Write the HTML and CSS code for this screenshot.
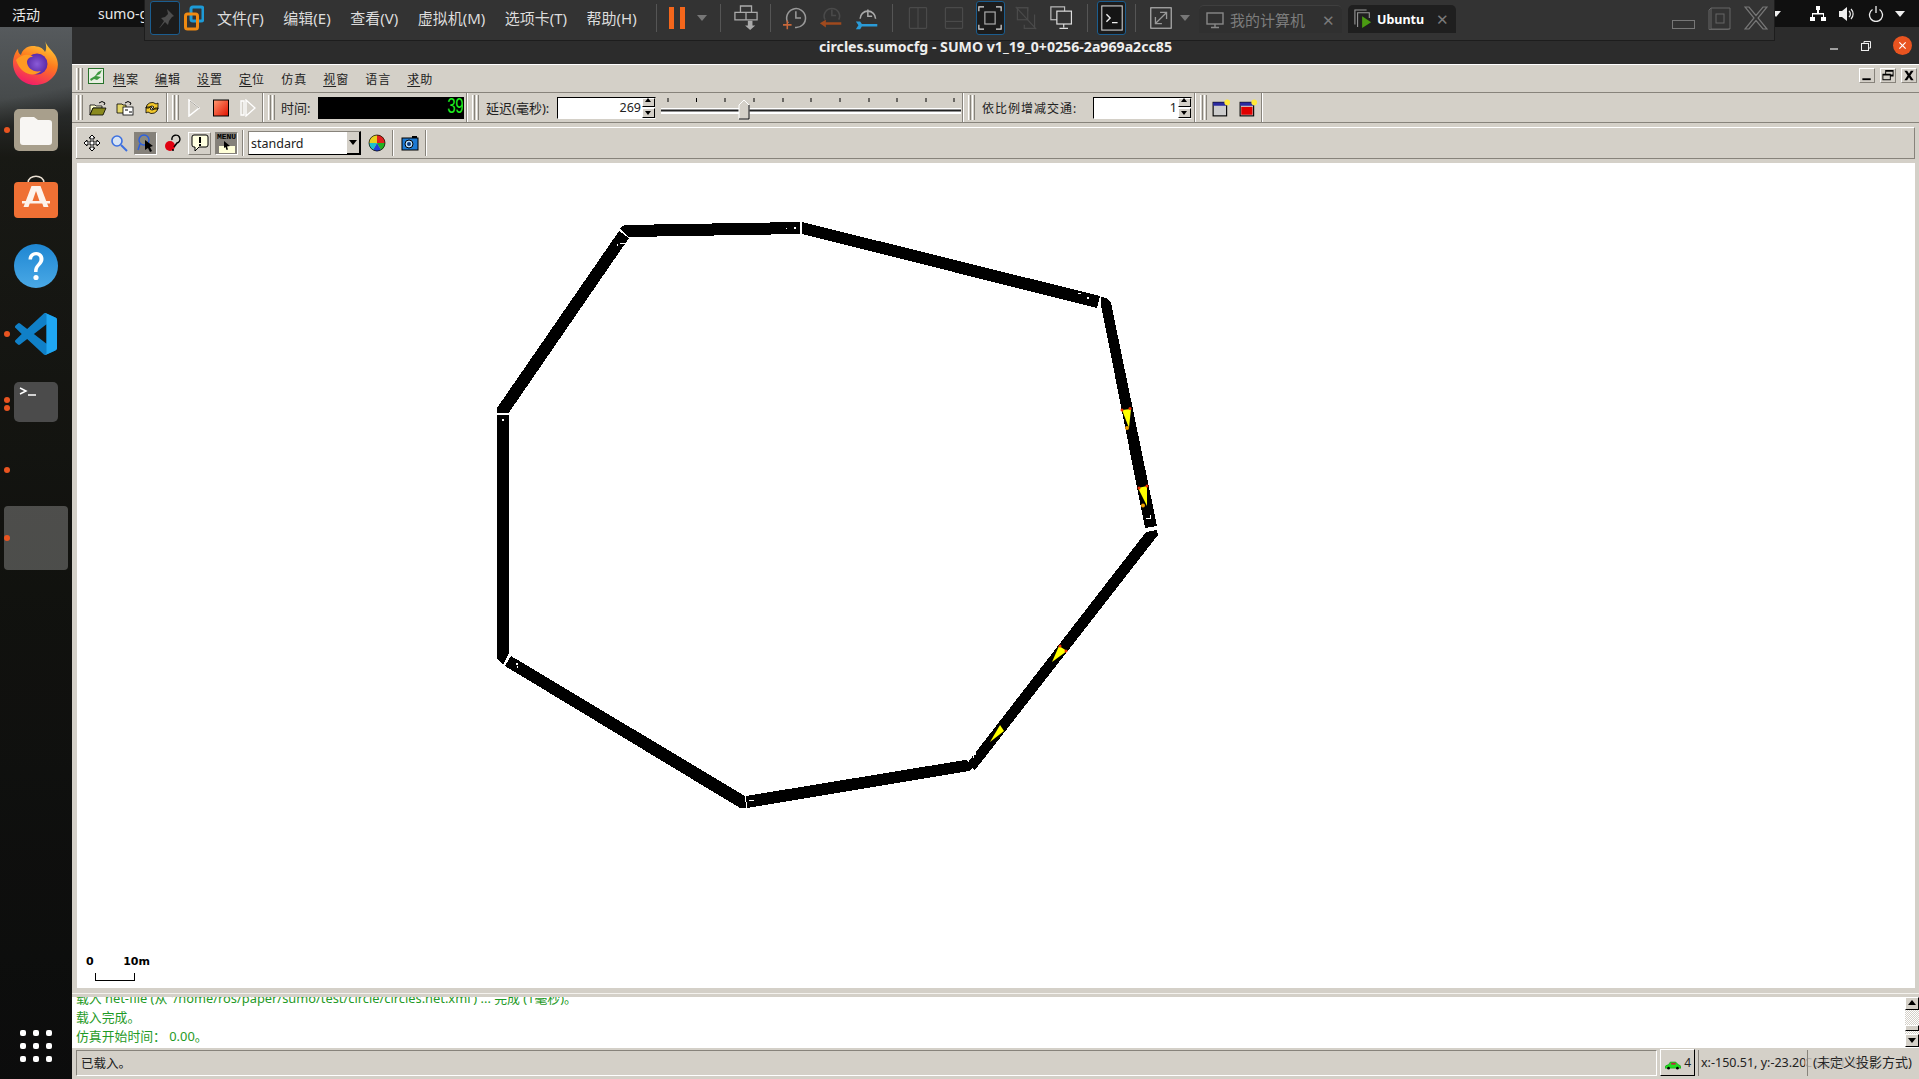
FILE: index.html
```html
<!DOCTYPE html>
<html lang="zh">
<head>
<meta charset="utf-8">
<title>circles.sumocfg - SUMO</title>
<link rel="stylesheet" href="styles.css">
</head>
<body>
<header class="gnome-bar">
  <span class="activities">活动</span>
  <span class="app-name">sumo-gui</span>
  <div class="tray">
    <span class="tray-caret tray-caret-left"></span>
    <svg class="tray-icon" viewBox="0 0 16 16"><path d="M6 0h4v4H9v3h5v4h2v4h-5v-4h2V8.500H3V11h2v4H0v-4h2V7h5V4H6z" fill="#fff"/></svg>
    <svg class="tray-icon" viewBox="0 0 16 16"><path d="M0 5h3l5-4v14l-5-4H0z" fill="#eee"/><path d="M10 5a4 4 0 0 1 0 6M12 3a7 7 0 0 1 0 10" stroke="#eee" stroke-width="1.200" fill="none"/></svg>
    <svg class="tray-icon tray-power" viewBox="0 0 16 16"><path d="M4.500 3.500a6.500 6.500 0 1 0 7 0M8 0v7" stroke="#eee" stroke-width="1.300" fill="none"/></svg>
    <span class="tray-caret"></span>
  </div>
</header>

<div class="vm-toolbar">
  <button class="vt-pin"><svg viewBox="0 0 20 20" class="vt-svg16"><path d="M12 1l7 7-2 1-3 4-1 4-3-3-7 8 6-9-3-3 4-1 3-3z" fill="#4d4d4d"/></svg></button>
  <svg class="vt-logo" viewBox="0 0 20 26"><rect x="7" y="2" width="12" height="14" rx="2" fill="none" stroke="#1d9ad6" stroke-width="3"/><rect x="1.500" y="9" width="12" height="15" rx="2" fill="none" stroke="#f08a12" stroke-width="3"/></svg>
  <nav class="vt-menu">
    <span>文件(F)</span><span>编辑(E)</span><span>查看(V)</span><span>虚拟机(M)</span><span>选项卡(T)</span><span>帮助(H)</span>
  </nav>
  <i class="vt-sep"></i>
  <svg class="vt-pause" viewBox="0 0 16 22"><rect x="0" width="5" height="22" fill="#f4661b"/><rect x="11" width="5" height="22" fill="#f4661b"/></svg>
  <i class="vt-caret vt-caret-a"></i>
  <i class="vt-sep vt-sep-a"></i>
  <span class="vt-btn vt-btn-first"><svg viewBox="0 0 26 28" class="vt-svg"><path d="M7 1h12v7H7zM1 8h12v8H1zM13 8h12v8H13z" fill="none" stroke="#aaa" stroke-width="1.400"/><path d="M15 17h5v5h3l-5.500 5-5.500-5h3z" fill="#aaa"/></svg></span>
  <i class="vt-sep vt-sep-b"></i>
  <span class="vt-btn vt-btn-b"><svg viewBox="0 0 28 28" class="vt-svg"><path d="M6 20A11 11 0 1 1 14 25" fill="none" stroke="#999" stroke-width="1.800"/><path d="M15 6v8h6" fill="none" stroke="#999" stroke-width="1.800"/><path d="M5 17v10M0 22h10" stroke="#c8673a" stroke-width="1.800"/></svg></span>
  <span class="vt-btn"><svg viewBox="0 0 28 28" class="vt-svg"><path d="M7 16A9 9 0 1 1 23 16" fill="none" stroke="#4a4a4a" stroke-width="1.800"/><path d="M15 4v7h5" fill="none" stroke="#4a4a4a" stroke-width="1.800"/><path d="M1 20l7-4v3h18v3H8v3z" fill="#a04a1e"/></svg></span>
  <span class="vt-btn"><svg viewBox="0 0 28 28" class="vt-svg"><path d="M6 15A9 9 0 1 1 24 15" fill="none" stroke="#aaa" stroke-width="1.800"/><path d="M15 4v8h5" fill="none" stroke="#aaa" stroke-width="1.800"/><path d="M1 18h5l2 3h18v3H8l-2 3H1l3-4.500z" fill="#2a9bd8"/></svg></span>
  <i class="vt-sep vt-sep-c"></i>
  <span class="vt-btn vt-btn-c"><svg viewBox="0 0 28 28" class="vt-svg"><rect x="4" y="2" width="20" height="24" rx="1" fill="none" stroke="#4a4a4a" stroke-width="1.400"/><path d="M14 2v24" stroke="#4a4a4a" stroke-width="1.400"/></svg></span>
  <span class="vt-btn"><svg viewBox="0 0 28 28" class="vt-svg"><rect x="4" y="2" width="20" height="24" rx="1" fill="none" stroke="#4a4a4a" stroke-width="1.400"/><path d="M4 18h20" stroke="#4a4a4a" stroke-width="1.400"/></svg></span>
  <span class="vt-btn vt-active"><svg viewBox="0 0 28 28" class="vt-svg"><path d="M1 6V1h6M21 1h6v5M27 22v5h-6M7 27H1v-5" fill="none" stroke="#ddd" stroke-width="1.400"/><rect x="8" y="7" width="12" height="14" fill="none" stroke="#aaa" stroke-width="1.400"/></svg></span>
  <span class="vt-btn"><svg viewBox="0 0 28 28" class="vt-svg"><path d="M4 2h12v4M24 10v16H12v-4M2 1l24 26" fill="none" stroke="#4a4a4a" stroke-width="1.400"/><rect x="4" y="2" width="12" height="14" fill="none" stroke="#4a4a4a" stroke-width="1.400"/></svg></span>
  <span class="vt-btn"><svg viewBox="0 0 28 28" class="vt-svg"><rect x="1" y="1" width="16" height="15" fill="#333" stroke="#bbb" stroke-width="1.400"/><rect x="8" y="6" width="17" height="15" fill="#333" stroke="#ddd" stroke-width="1.400"/><path d="M16 21v4M11 26h10" stroke="#ddd" stroke-width="1.400"/></svg></span>
  <i class="vt-sep vt-sep-d"></i>
  <span class="vt-term"><svg viewBox="0 0 24 28" class="vt-svg"><rect x="1" y="1" width="22" height="26" fill="#151515" stroke="#ccc" stroke-width="1.200"/><path d="M6 10l4 4-4 4M12 19h6" fill="none" stroke="#eee" stroke-width="1.500"/></svg></span>
  <i class="vt-sep vt-sep-e"></i>
  <span class="vt-btn vt-btn-e"><svg viewBox="0 0 24 28" class="vt-svg"><rect x="1" y="3" width="22" height="22" fill="none" stroke="#bbb" stroke-width="1.200"/><path d="M6 20L18 8M11 8h7v7M6 13v7h7" fill="none" stroke="#999" stroke-width="1.400"/></svg></span>
  <i class="vt-caret vt-caret-b"></i>
  <div class="vt-tab vt-tab-a"><svg viewBox="0 0 18 18" class="vt-tab-icon"><rect x="1" y="2" width="16" height="11" fill="none" stroke="#888" stroke-width="1.400"/><path d="M9 13v3M5 16.500h8" stroke="#888" stroke-width="1.400"/></svg><span>我的计算机</span><b class="vt-x">✕</b></div>
  <div class="vt-tab vt-tab-b"><svg viewBox="0 0 20 22" class="vt-tab-icon"><path d="M1 17V1h13M4 20V4h13v6" fill="none" stroke="#999" stroke-width="1.200"/><path d="M9 8l10 6.500L9 21z" fill="#4b9b12"/></svg><span>Ubuntu</span><b class="vt-x">✕</b></div>
  <div class="vt-win">
    <svg viewBox="0 0 23 10" class="vt-win-min"><rect x=".5" y=".5" width="22" height="8" fill="none" stroke="#777"/></svg>
    <svg viewBox="0 0 23 24" class="vt-win-max"><path d="M3 2h19v21H3zM3 2L1 4v19.500h19l2-1" fill="none" stroke="#666"/><rect x="8" y="8" width="8" height="9" fill="none" stroke="#666"/></svg>
    <svg viewBox="0 0 24 24" class="vt-win-close"><path d="M1 1h4l7 8.500L19 1h4l-9 11 9 11h-4l-7-8.500L5 23H1l9-11z" fill="none" stroke="#777" stroke-width="1.200"/></svg>
  </div>
</div>

<div class="desk">
  <aside class="dock">
    <div class="dock-item">
      <svg class="dock-icon" viewBox="0 0 46 46">
        <defs>
          <linearGradient id="ff1" x1=".7" y1="0" x2=".3" y2="1"><stop offset="0" stop-color="#ffd43a"/><stop offset=".45" stop-color="#ff7a1e"/><stop offset="1" stop-color="#f2186c"/></linearGradient>
          <radialGradient id="ff2"><stop offset="0" stop-color="#8a5bd8"/><stop offset="1" stop-color="#5b2aa8"/></radialGradient>
        </defs>
        <path d="M32 1c1 6 6 9 10 15 5 8 3 17-2 22-5 6-12 8-18 8C10 46 0 36 0 24c0-5 2-11 5-14 0 3 1 5 3 6 1-5 6-9 11-9 7 0 11 2 13 6 2-3 1-8 0-12z" fill="url(#ff1)"/>
        <circle cx="24" cy="25" r="10.500" fill="url(#ff2)"/>
        <path d="M3 21c4-5 13-7 17-3-4 0-6 2-6 5 0 6 7 11 14 9-6 6-20 5-25-11z" fill="#ff9a22"/>
      </svg>
    </div>
    <div class="dock-item"><i class="dot dot-mid"></i>
      <svg class="dock-icon" viewBox="0 0 46 46"><rect x="1" y="2" width="44" height="42" rx="5" fill="#a89f8c"/><path d="M7 13q0-3 3-3h11l4 3h11q3 0 3 3v19q0 3-3 3H10q-3 0-3-3z" fill="#f8f6f3"/></svg>
    </div>
    <div class="dock-item">
      <svg class="dock-icon" viewBox="0 0 46 46"><path d="M15 8c0-9 16-9 16 0" fill="none" stroke="#e9dfd2" stroke-width="1.500"/><rect x="1" y="7" width="44" height="36" rx="4" fill="#ef7034"/><path d="M18.500 11h9l8 21h-5l-2-6H17.500l-2 6h-5zM23 16l-3.500 10h7z" fill="#fdf3ec"/><rect x="9" y="26" width="28" height="2.500" fill="#fdf3ec"/></svg>
    </div>
    <div class="dock-item">
      <svg class="dock-icon" viewBox="0 0 46 46"><defs><linearGradient id="hp" x1="0" y1="0" x2="0" y2="1"><stop offset="0" stop-color="#1e86d2"/><stop offset="1" stop-color="#4aa9e6"/></linearGradient></defs><circle cx="23" cy="23" r="22" fill="url(#hp)"/><path d="M15.500 16.500c0-10 15-10 15-.5 0 6-6 6-6 13h-3.500c0-8 5.500-8 5.500-13 0-5-7-5-7.500.5z" fill="#fff"/><circle cx="23" cy="34.500" r="2.600" fill="#fff"/></svg>
    </div>
    <div class="dock-item"><i class="dot dot-mid"></i>
      <svg class="dock-icon dock-icon-code" viewBox="0 0 100 100"><path d="M96 11L75 1a6 6 0 0 0-7 1L29 38 12 25a4 4 0 0 0-5 0l-5.500 5a4 4 0 0 0 0 6L16 50 1.500 64a4 4 0 0 0 0 6L7 75a4 4 0 0 0 5 0l17-13 39 36a6 6 0 0 0 7 1l21-10a6 6 0 0 0 4-6V17a6 6 0 0 0-4-6zM75 73L45 50l30-23z" fill="#1080c8"/><path d="M68 98a6 6 0 0 0 7 1l21-10a6 6 0 0 0 4-6V17a6 6 0 0 0-4-6L75 1a6 6 0 0 0-7 1 4 4 0 0 1 7 3v90a4 4 0 0 1-7 3z" fill="#1fa6f2"/></svg>
    </div>
    <div class="dock-item"><i class="dot dot-up"></i><i class="dot dot-down"></i>
      <svg class="dock-icon" viewBox="0 0 46 46"><rect x="1" y="3" width="44" height="40" rx="5" fill="#4b4b4b"/><path d="M7 9l6 3-6 3" fill="none" stroke="#fff" stroke-width="1.500"/><path d="M15 16h8" stroke="#fff" stroke-width="1.500"/></svg>
    </div>
    <div class="dock-item"><i class="dot dot-mid"></i></div>
    <div class="dock-item"><i class="dot dot-mid"></i><div class="dock-active"></div></div>
    <div class="app-grid"><i></i><i></i><i></i><i></i><i></i><i></i><i></i><i></i><i></i></div>
  </aside>

  <div class="win">
    <div class="title-bar">
      <span class="title-text">circles.sumocfg - SUMO v1_19_0+0256-2a969a2cc85</span>
      <div class="title-btns">
        <svg viewBox="0 0 10 10" class="tb-min"><path d="M1 8h8" stroke="#eee" stroke-width="1.200"/></svg>
        <svg viewBox="0 0 10 10" class="tb-max"><path d="M3 2.500V.5h6.500V7H7.500" fill="none" stroke="#eee"/><rect x=".5" y="2.500" width="7" height="7" fill="none" stroke="#eee"/></svg>
        <span class="tb-close"><svg viewBox="0 0 10 10"><path d="M1.500 1.500l7 7M8.500 1.500l-7 7" stroke="#fff" stroke-width="1.300"/></svg></span>
      </div>
    </div>

    <main class="sumo">
      <div class="menu-row">
        <i class="grip"></i>
        <svg class="net-logo" viewBox="0 0 16 16"><rect x=".5" y=".5" width="15" height="15" fill="#e8efe2" stroke="#27722b"/><path d="M2 11l5-3 3-4 4-2-2 4-4 2 5 1-4 3-3-1-3 2z" fill="#3d9a3f"/></svg>
        <nav class="menu-items">
          <span><u>档</u>案</span><span><u>编</u>辑</span><span><u>设</u>置</span><span><u>定</u>位</span><span>仿真</span><span><u>视</u>窗</span><span>语言</span><span><u>求</u>助</span>
        </nav>
        <div class="mdi-btns">
          <span class="mdi"><svg viewBox="0 0 14 14"><rect x="2" y="10" width="9" height="2"/></svg></span>
          <span class="mdi"><svg viewBox="0 0 14 14"><path d="M4 1h9v7h-3v4H1V5h3zM5 3v2h5v1h2V3zM2 7v4h7V7z" fill-rule="evenodd"/></svg></span>
          <span class="mdi"><svg viewBox="0 0 14 14"><path d="M2 2h3l2 3 2-3h3L8.500 7 12 12H9L7 9l-2 3H2l3.500-5z"/></svg></span>
        </div>
      </div>

      <div class="tool-row">
        <section class="tb-sec sec-a">
          <i class="grip"></i>
          <span class="ico"><svg viewBox="0 0 18 16"><path d="M1 5h5l1 1h6v2H4L1 15z" fill="#ffffd0" stroke="#000" stroke-width=".8"/><path d="M1 15l3-7h13l-3 7z" fill="#8a8a1e" stroke="#000" stroke-width=".8"/><path d="M10 3q3-3 6 0l-1 2" fill="none" stroke="#000"/></svg></span>
          <span class="ico"><svg viewBox="0 0 18 16"><path d="M1 4h5l1 1h3v8H1z" fill="#e4d76a" stroke="#000" stroke-width=".8"/><rect x="7" y="7" width="10" height="8" fill="#fff" stroke="#000" stroke-width=".8"/><path d="M9 10h3M13 12h3" stroke="#000"/><path d="M9 3q3-3 6 0l-1 2" fill="none" stroke="#000"/></svg></span>
          <span class="ico"><svg viewBox="0 0 18 18"><path d="M3 9a6 6 0 0 1 10-4l2-1v6h-6l2-2a3 3 0 0 0-5 1zM15 9a6 6 0 0 1-10 4l-2 1V8h6l-2 2a3 3 0 0 0 5-1z" fill="#f1c72c" stroke="#000" stroke-width=".8"/></svg></span>
        </section>
        <section class="tb-sec sec-b">
          <i class="grip"></i>
          <span class="ico"><svg viewBox="0 0 14 18"><path d="M2 1l10 8-10 8z" fill="none" stroke="#fff" stroke-width="1.500"/><path d="M3 2l9 7" stroke="#a8a49c"/></svg></span>
          <span class="ico"><svg viewBox="0 0 16 18"><defs><linearGradient id="st" x1="0" y1="0" x2="1" y2="1"><stop offset="0" stop-color="#ff9a70"/><stop offset="1" stop-color="#e01000"/></linearGradient></defs><rect x=".5" y="1" width="15" height="16" fill="url(#st)" stroke="#000"/></svg></span>
          <span class="ico"><svg viewBox="0 0 16 18"><path d="M1 2h3v14H1z" fill="none" stroke="#fff" stroke-width="1.300"/><path d="M6 1l9 8-9 8z" fill="none" stroke="#fff" stroke-width="1.300"/></svg></span>
        </section>
        <section class="tb-sec sec-c">
          <i class="grip"></i>
          <span class="lbl lbl-time">时间:</span>
          <div class="lcd"><span>39</span></div>
        </section>
        <section class="tb-sec sec-d">
          <i class="grip"></i>
          <span class="lbl lbl-delay">延迟(毫秒):</span>
          <div class="spin spin-delay"><span class="spin-val">269</span><div class="spin-arrows"><i class="up"></i><i class="down"></i></div></div>
          <svg class="slider" viewBox="0 0 300 26">
            <path d="M7 3v4M35.500 3v4M64 3v4M93 3v4M122 3v4M150 3v4M179 3v4M208 3v4M236 3v4M265 3v4M293 3v4" stroke="#000"/>
            <rect x="0" y="13" width="300" height="6" fill="#fff"/><rect x="0" y="14.500" width="300" height="2" fill="#222"/>
            <path d="M78 10l5-5 5 5v14H78z" fill="#d4d0c8" stroke="#fff"/><path d="M88 10v14H78" fill="none" stroke="#000"/>
          </svg>
        </section>
        <section class="tb-sec sec-e">
          <i class="grip"></i>
          <span class="lbl lbl-scale">依比例增减交通:</span>
          <div class="spin spin-scale"><span class="spin-val">1</span><div class="spin-arrows"><i class="up"></i><i class="down"></i></div></div>
        </section>
        <section class="tb-sec sec-f">
          <i class="grip"></i>
          <span class="ico ico-win"><svg viewBox="0 0 16 16"><rect x="1" y="3" width="12" height="12" fill="#ccc" stroke="#000"/><rect x="1" y="3" width="12" height="3" fill="#2a2aa0"/><circle cx="13.500" cy="3" r="2.500" fill="#ffe83a"/></svg></span>
          <span class="ico ico-win"><svg viewBox="0 0 16 16"><rect x="1" y="3" width="12" height="12" fill="#ccc" stroke="#000"/><rect x="1" y="3" width="12" height="3" fill="#2a2aa0"/><rect x="2" y="7" width="10" height="7" fill="#e00000"/><circle cx="13.500" cy="3" r="2.500" fill="#ffe83a"/></svg></span>
        </section>
      </div>

      <div class="view-row">
        <span class="vb"><svg viewBox="0 0 18 18"><path d="M9 1l3 3h-2v4h4V6l3 3-3 3v-2h-4v4h2l-3 3-3-3h2v-4H4v2L1 9l3-3v2h4V4H6z" fill="#fff" stroke="#000" stroke-width="1"/></svg></span>
        <span class="vb"><svg viewBox="0 0 18 18"><circle cx="7" cy="7" r="5" fill="#d8e4f4" stroke="#3c70e0" stroke-width="1.600"/><path d="M11 11l6 6" stroke="#3c70e0" stroke-width="2"/></svg></span>
        <span class="vb vb-on"><svg viewBox="0 0 18 18"><circle cx="7" cy="6" r="5" fill="#8a8a80" stroke="#2c60e0" stroke-width="1.400"/><path d="M3 10l-2 6" stroke="#2c60e0" stroke-width="1.500"/><path d="M8 6l8 6-3 1 2 4-2 1-2-4-3 2z" fill="#000"/></svg></span>
        <span class="vb"><svg viewBox="0 0 18 18"><circle cx="6" cy="12" r="5" fill="#e00010"/><path d="M8 6a4 4 0 1 1 5 3l-3 4M9 15v2" fill="none" stroke="#000" stroke-width="1.500"/></svg></span>
        <span class="vb vb-raised"><svg viewBox="0 0 18 18"><path d="M3 1h12q2 0 2 2v8q0 2-2 2H8l-4 4v-4H3q-2 0-2-2V3q0-2 2-2z" fill="#ffffe0" stroke="#000"/><path d="M9 3v6M9 10v2" stroke="#000" stroke-width="2"/></svg></span>
        <span class="vb vb-on vb-menu"><b>MENU</b><svg viewBox="0 0 18 12"><rect x="1" y="5" width="16" height="7" fill="#ffffd8"/><path d="M6 0l6 5-3 .5 1 3-1.500.5-1-3L6 7z" fill="#000"/></svg></span>
        <i class="vsep"></i>
        <div class="combo"><span>standard</span><i class="combo-btn"></i></div>
        <span class="vb vb-color"><svg viewBox="0 0 18 18"><circle cx="9" cy="9" r="8" fill="#e8d020"/><path d="M9 9L9 1a8 8 0 0 1 8 8z" fill="#e02020"/><path d="M9 9h8a8 8 0 0 1-4 7z" fill="#20b020"/><path d="M9 9l4 7a8 8 0 0 1-8 0z" fill="#2040e0"/><path d="M9 9l-4 7a8 8 0 0 1-4-7z" fill="#20c0d0"/><circle cx="9" cy="9" r="8" fill="none" stroke="#000" stroke-width=".7"/></svg></span>
        <i class="vsep"></i>
        <span class="vb vb-cam"><svg viewBox="0 0 18 16"><rect x="1" y="3" width="16" height="12" fill="#1c7ad4" stroke="#000"/><rect x="11" y="1" width="5" height="2" fill="#000"/><circle cx="8" cy="9" r="4" fill="#bfe4ff" stroke="#000"/><circle cx="8" cy="9" r="2" fill="#0a3a80"/></svg></span>
        <i class="vsep"></i>
      </div>

      <div class="canvas">
        <svg class="net" viewBox="77 163 1838 825" preserveAspectRatio="none" shape-rendering="crispEdges">
          <g fill="#000">
            <polygon points="497,408 497,412.500 509,412.500 629,238 619,231"/>
            <polygon points="620,228 625,225 800,222 800,234 628,237"/>
            <polygon points="802,222 1100,296 1097,308 802,234"/>
            <polygon points="1101,297 1107,298 1111,303 1157,526 1145,528 1101,305"/>
            <polygon points="1146,532 1157,530 1158,535 975,770 967,763.500"/>
            <polygon points="965,760 968,761 972,768 969,771 747,808 746,796"/>
            <polygon points="511,656 745,796 746,808 740,808 505,666"/>
            <polygon points="497,415 509,415 509,653 503,665 497,658"/>
          </g>
          <g fill="#fff">
            <rect x="502" y="419" width="2" height="2"/>
            <rect x="794" y="227" width="2" height="2"/><rect x="786" y="228" width="1" height="1"/>
            <rect x="620" y="243" width="5" height="1"/><rect x="617" y="244" width="1" height="2"/>
            <rect x="1087" y="297" width="2" height="2"/><rect x="1078" y="293" width="3" height="1"/>
            <rect x="1146" y="518" width="4" height="1"/><rect x="1150" y="515" width="1" height="4"/>
            <rect x="973" y="755" width="1" height="3"/><rect x="974" y="753" width="2" height="2"/>
            <rect x="516" y="663" width="2" height="2"/><rect x="517" y="666" width="1" height="2"/>
            <rect x="749" y="800" width="5" height="1"/>
          </g>
          <g fill="#ffff00" shape-rendering="auto">
            <polygon points="1122,410 1131,409 1129,428"/>
            <polygon points="1138,488 1147,486 1147,506"/>
            <polygon points="1059,646 1067,651 1052,662"/>
            <polygon points="1000,725 1004,731 990,742"/>
          </g>
          <g fill="#f03000" shape-rendering="auto">
            <circle cx="1122" cy="410" r="1.500"/><circle cx="1130" cy="408.500" r="1.500"/>
            <circle cx="1139" cy="488" r="1.500"/><circle cx="1147" cy="486" r="1.500"/>
            <circle cx="1060" cy="646" r="1.500"/><circle cx="1066" cy="651" r="1.500"/>
          </g>
          <g fill="#f0a000" shape-rendering="auto">
            <circle cx="1127" cy="428" r="2"/><circle cx="1143" cy="505.500" r="2"/>
          </g>
        </svg>
        <div class="scale-bar">
          <div class="scale-labels"><b>0</b><b>10m</b></div>
          <div class="scale-rule"></div>
        </div>
      </div>
      <div class="sash"></div>

      <div class="messages">
        <div class="msg-text">
          <p>载入 net-file (从 '/home/ros/paper/sumo/test/circle/circles.net.xml') ... 完成 (1毫秒)。</p>
          <p>载入完成。</p>
          <p>仿真开始时间： 0.00。</p>
        </div>
        <div class="msg-scroll"><i class="sb-btn up"></i><i class="sb-track"></i><i class="sb-thumb"></i><i class="sb-track sb-short"></i><i class="sb-btn down"></i></div>
      </div>

      <footer class="status">
        <span class="st-main">已载入。</span>
        <span class="st-car"><svg viewBox="0 0 18 10"><path d="M0 7q0-2 4-3l2-3h6l3 3q3 1 3 3v1H0z" fill="#22dd22" stroke="#0a7a0a" stroke-width=".5"/><path d="M7 2h5v2H7z" fill="#c02040"/><circle cx="4" cy="8" r="1.500" fill="#000"/><circle cx="14" cy="8" r="1.500" fill="#000"/></svg>4</span>
        <span class="st-coord">x:-150.51, y:-23.20</span>
        <span class="st-proj">(未定义投影方式)<em class="watermark">CSDN @</em></span>
      </footer>
    </main>
  </div>
</div>
</body>
</html>
```
FILE: styles.css
```css
* { box-sizing: border-box; }
html, body { margin: 0; height: 100%; }
body {
  width: 1919px;
  height: 1079px;
  overflow: hidden;
  position: relative;
  display: flex;
  flex-direction: column;
  background: #111;
  font-family: "Noto Sans", "Noto Sans CJK SC", sans-serif;
  font-size: 12px;
}
i, em { font-style: normal; }
svg { display: block; }

/* GNOME top bar */
.gnome-bar { height: 27px; flex: none; background: #101010; color: #e8e8e8; display: flex; align-items: center; font-size: 14px; }
.activities { margin-left: 12px; }
.app-name { margin-left: 58px; font-size: 14px; line-height: 27px; }
.tray { margin-left: auto; display: flex; align-items: center; }
.tray-icon { width: 16px; height: 16px; margin-right: 13px; }
.tray-power { margin-right: 11px; }
.tray-caret { width: 0; height: 0; border: 5px solid transparent; border-top: 6px solid #eee; border-bottom: 0; margin-right: 14px; }
.tray-caret-left { margin-right: 29px; }

/* VMware toolbar */
.vm-toolbar {
  position: absolute; left: 144px; top: 0; width: 1631px; height: 41px;
  background: #333; border: 1px solid #1d1d1d; border-top: 0;
  display: flex; align-items: center; color: #ddd; z-index: 5; padding-bottom: 5px;
}
.vt-pin { width: 30px; height: 34px; margin-left: 5px; background: #1c1c1c; border: 1px solid #1b5d8f; border-radius: 3px; padding: 0; display: flex; align-items: center; justify-content: center; }
.vt-svg16 { width: 20px; height: 20px; }
.vt-logo { width: 20px; height: 26px; margin-left: 4px; }
.vt-menu { width: 439px; margin-left: 13px; display: flex; gap: 19.500px; font-size: 15px; white-space: nowrap; }
.vt-sep { width: 1px; height: 28px; background: #555; flex: none; }
.vt-pause { width: 16px; height: 22px; margin-left: 12px; flex: none; }
.vt-caret { width: 0; height: 0; border: 5px solid transparent; border-top: 6px solid #777; border-bottom: 0; flex: none; }
.vt-caret-a { margin-left: 12px; }
.vt-caret-b { margin-left: 1px; }
.vt-sep-a { margin-left: 13px; }
.vt-sep-b { margin-left: 6px; }
.vt-sep-c { margin-left: 7px; }
.vt-sep-d { margin-left: 7px; }
.vt-sep-e { margin-left: 9px; }
.vt-btn { width: 36px; height: 34px; flex: none; display: flex; align-items: center; justify-content: center; border-radius: 3px; }
.vt-btn-first { margin-left: 7px; }
.vt-btn-b { margin-left: 6px; }
.vt-btn-c { margin-left: 7px; }
.vt-btn-e { margin-left: 7px; }
.vt-active { width: 29px; margin: 0 3.5px; background: #1c1c1c; border: 1px solid #1b5d8f; }
.vt-term { width: 29px; height: 34px; margin-left: 9px; flex: none; background: #1c1c1c; border: 1px solid #1b5d8f; border-radius: 3px; display: flex; align-items: center; justify-content: center; }
.vt-svg { width: 24px; height: 26px; }
.vt-tab { height: 28px; margin-top: 5px; align-self: flex-start; display: flex; align-items: center; border-radius: 5px 5px 0 0; flex: none; white-space: nowrap; }
.vt-tab-a { width: 143px; margin-left: 9px; background: #303030; color: #7d7d7d; font-size: 15px; border-top: 1px solid #3f3f3f; padding-left: 7px; }
.vt-tab-b { width: 108px; margin-left: 6px; background: #1f1f1f; color: #fff; font-weight: 700; font-size: 12.500px; padding-left: 6px; }
.vt-tab-icon { width: 18px; height: 20px; margin-right: 6px; flex: none; }
.vt-tab-b .vt-tab-icon { margin-right: 5px; }
.vt-x { margin-left: auto; margin-right: 7px; font-weight: 400; font-size: 15px; color: #7a7a7a; }
.vt-win { margin-left: auto; display: flex; align-items: flex-end; gap: 13px; margin-right: 6px; }
.vt-win-min { width: 23px; height: 10px; }
.vt-win-max { width: 23px; height: 24px; }
.vt-win-close { width: 24px; height: 24px; }

/* Desk layout */
.desk { flex: 1; display: flex; min-height: 0; }

/* Dock */
.dock {
  width: 72px; flex: none; display: flex; flex-direction: column; padding-top: 1px;
  background:
    linear-gradient(168deg, rgba(0,0,0,0) 0 72px, rgba(0,0,0,.35) 100px),
    linear-gradient(#565a5d 0, #474b4c 70px, #25261f 130px, #1b1c17 500px, #121313 1052px);
}
.dock-item { height: 68px; flex: none; position: relative; display: flex; align-items: center; justify-content: center; }
.dock-icon { width: 46px; height: 46px; }
.dock-icon-code { width: 42px; height: 42px; }
.dot { position: absolute; left: 4px; width: 6px; height: 6px; border-radius: 50%; background: #e95420; }
.dot-mid { top: 31px; }
.dot-up { top: 29px; }
.dot-down { top: 37px; }
.dock-active { width: 64px; height: 64px; border-radius: 4px; background: rgba(255,255,255,.25); }
.app-grid { margin-top: auto; margin-bottom: 17px; margin-left: 20px; display: grid; grid-template-columns: repeat(3, 6px); gap: 7px; }
.app-grid i { width: 6px; height: 6px; background: #fff; border-radius: 2px; }

/* Title bar */
.win { flex: 1; display: flex; flex-direction: column; min-width: 0; }
.title-bar { height: 37px; flex: none; background: #2c2c2c; position: relative; display: flex; align-items: center; justify-content: center; padding-top: 1px; }
.title-text { color: #eee; font-weight: 700; font-size: 14.150px; }
.title-btns { position: absolute; right: 7px; top: 9px; display: flex; align-items: center; gap: 22px; }
.tb-min { width: 10px; height: 10px; }
.tb-max { width: 10px; height: 10px; }
.tb-close { width: 19px; height: 19px; border-radius: 50%; background: #e95420; display: flex; align-items: center; justify-content: center; }
.tb-close svg { width: 9px; height: 9px; }

/* SUMO window */
.sumo { flex: 1; min-height: 0; display: flex; flex-direction: column; background: #d4d0c8; border-top: 1px solid #fff; color: #222; }
.grip {
  width: 7px; height: 100%; flex: none;
  background: linear-gradient(90deg, #fff 0 1px, #d4d0c8 1px 2px, #87837b 2px 3px, #d4d0c8 3px 4px, #fff 4px 5px, #d4d0c8 5px 6px, #87837b 6px 7px);
}
.menu-row { height: 28px; flex: none; display: flex; align-items: center; padding: 3px 0 2px 4px; border-bottom: 1px solid #87837b; }
.net-logo { width: 16px; height: 16px; margin-left: 5px; margin-top: -6px; flex: none; }
.menu-items { display: flex; gap: 16px; margin-left: 9px; font-size: 12px; letter-spacing: 1px; }
.menu-items u { text-underline-offset: 2px; }
.mdi-btns { margin-left: auto; display: flex; gap: 5px; margin-right: 2px; margin-top: -7px; }
.mdi { width: 16px; height: 15px; background: #d4d0c8; border: 1px solid; border-color: #fff #87837b #87837b #fff; display: block; }
.mdi svg { width: 14px; height: 13px; }

.tool-row { height: 30px; flex: none; display: flex; border-bottom: 1px solid #87837b; }
.tb-sec { display: flex; align-items: center; height: 29px; padding: 2px 0 2px 4px; border-right: 1px solid #fff; box-shadow: inset -1px 0 0 #87837b; flex: none; }
.sec-a { width: 96px; }
.sec-b { width: 96px; }
.sec-c { width: 204px; }
.sec-d { width: 496px; }
.sec-e { width: 232px; }
.sec-f { width: 67px; }
.ico { width: 27px; height: 20px; flex: none; display: flex; align-items: center; justify-content: center; }
.ico svg { width: 18px; height: 18px; }
.sec-a .grip + .ico, .sec-b .grip + .ico { margin-left: 1px; }
.lbl { white-space: nowrap; flex: none; font-size: 13px; }
.lbl-time { margin-left: 6px; width: 37px; }
.lbl-delay { margin-left: 7px; width: 71px; }
.lbl-scale { margin-left: 7px; width: 110px; letter-spacing: 1px; font-size: 12px; }
.lcd { width: 146px; height: 22px; background: #000; flex: none; display: flex; justify-content: flex-end; align-items: center; padding-right: 1px; overflow: hidden; }
.lcd span { color: #1fef1f; font: 15px/1 "Liberation Mono", monospace; transform: scaleY(1.450); letter-spacing: -1px; }
.spin { height: 22px; background: #fff; flex: none; display: flex; align-items: center; justify-content: flex-end; border: 1px solid; border-color: #000 #d4d0c8 #fff #000; }
.spin-delay { width: 99px; }
.spin-scale { width: 99px; margin-left: 1px; }
.spin-val { font-size: 12.5px; margin-right: 1px; }
.spin-arrows { width: 13px; height: 20px; display: flex; flex-direction: column; gap: 1px; }
.spin-arrows i { flex: 1; background: #d4d0c8; position: relative; border: 1px solid; border-color: #fff #000 #000 #fff; }
.spin-arrows i::after { content: ""; position: absolute; left: 2px; border: 3.500px solid transparent; }
.spin-arrows .up::after { top: -1px; border-bottom: 4px solid #000; border-top: 0; }
.spin-arrows .down::after { top: 2px; border-top: 4px solid #000; border-bottom: 0; }
.slider { width: 300px; height: 26px; margin-left: 5px; flex: none; }

.view-row { height: 32px; flex: none; margin: 4px 4px 0; display: flex; align-items: center; padding-left: 4px; gap: 4px; border-top: 1px solid #fff; border-bottom: 1px solid #87837b; border-right: 1px solid #87837b; box-shadow: inset 1px 0 0 #fff; }
.vb { width: 23px; height: 23px; flex: none; display: flex; align-items: center; justify-content: center; }
.vb svg { width: 18px; height: 18px; }
.vb-on { background: #85817a; border: 1px solid; border-color: #87837b #fff #fff #87837b; }
.vb-raised { border: 1px solid; border-color: #fff #87837b #87837b #fff; }
.vb-menu { flex-direction: column; gap: 0; }
.vb-menu b { font: 700 8px/8px "Liberation Mono", monospace; color: #000; }
.vb-menu svg { height: 12px; }
.vsep { width: 2px; height: 26px; flex: none; background: linear-gradient(90deg, #87837b 1px, #fff 1px); }
.combo { width: 113px; height: 24px; flex: none; background: #fff; border: 1px solid; border-color: #87837b #000 #000 #87837b; display: flex; align-items: center; padding-left: 2px; font-size: 12.5px; }
.combo-btn { margin-left: auto; width: 14px; height: 22px; background: #d4d0c8; position: relative; border-left: 1px solid #fff; box-shadow: inset -1px -1px 0 #000; }
.combo-btn::after { content: ""; position: absolute; left: 2px; top: 8px; border: 4.500px solid transparent; border-top: 5px solid #000; border-bottom: 0; }

.canvas { flex: 1; min-height: 0; position: relative; margin: 4px 4px 5px 5px; background: #fff; }
.net { width: 100%; height: 100%; }
.scale-bar { position: absolute; left: 9px; bottom: 7px; width: 64px; }
.scale-labels { display: flex; justify-content: space-between; font: 700 11px/14px "DejaVu Sans", sans-serif; color: #000; }
.scale-rule { margin-left: 9px; margin-top: 4px; width: 40px; height: 8px; border: 1px solid #000; border-top: 0; }
.sash { height: 4px; flex: none; border-top: 1px solid #f4f2ee; }

.messages { height: 50px; flex: none; background: #fff; display: flex; overflow: hidden; padding-left: 4px; }
.msg-text { flex: 1; margin-top: -8px; color: #1f9a26; font-size: 12.850px; line-height: 19px; }
.msg-text p { margin: 0; white-space: nowrap; }
.msg-scroll { width: 14px; flex: none; display: flex; flex-direction: column; background: #d4d0c8; }
.sb-btn { height: 13px; flex: none; background: #d4d0c8; border: 1px solid; border-color: #fff #000 #000 #fff; position: relative; }
.sb-btn::after { content: ""; position: absolute; left: 2px; border: 4px solid transparent; }
.sb-btn.up::after { top: 2px; border-bottom: 5px solid #000; border-top: 0; }
.sb-btn.down::after { top: 3px; border-top: 5px solid #000; border-bottom: 0; }
.sb-track { flex: 1; background: repeating-conic-gradient(#fff 0 25%, #d4d0c8 0 50%) 0 0 / 2px 2px; }
.sb-short { flex: .2; }
.sb-thumb { height: 6px; border: 1px solid; border-color: #fff #000 #000 #fff; background: #d4d0c8; flex: none; }

.status { height: 32px; flex: none; display: flex; align-items: center; padding: 1px 3px 3px 4px; gap: 3px; border-top: 1px solid #fff; }
.st-main { width: 1581px; height: 26px; flex: none; border: 1px solid; border-color: #87837b #fff #fff #87837b; padding-left: 4px; line-height: 25px; font-size: 12.500px; }
.st-car { width: 35px; height: 27px; flex: none; border: 1px solid; border-color: #fff #000 #000 #fff; display: flex; align-items: center; justify-content: flex-end; padding-right: 3px; gap: 3px; font-size: 12px; }
.st-car svg { width: 16px; height: 9px; margin-top: 6px; }
.st-coord { width: 107px; height: 26px; flex: none; border-left: 1px solid #87837b; padding-left: 2px; line-height: 25px; white-space: nowrap; overflow: hidden; font-size: 12.500px; }
.st-proj { width: 108px; height: 26px; flex: none; border-left: 1px solid #87837b; padding-left: 5px; line-height: 25px; white-space: nowrap; position: relative; font-size: 13px; margin-left: -1px; }
.watermark { position: absolute; left: -4px; top: 0; color: rgba(130,130,130,.45); font-size: 13px; letter-spacing: 2px; }
```
